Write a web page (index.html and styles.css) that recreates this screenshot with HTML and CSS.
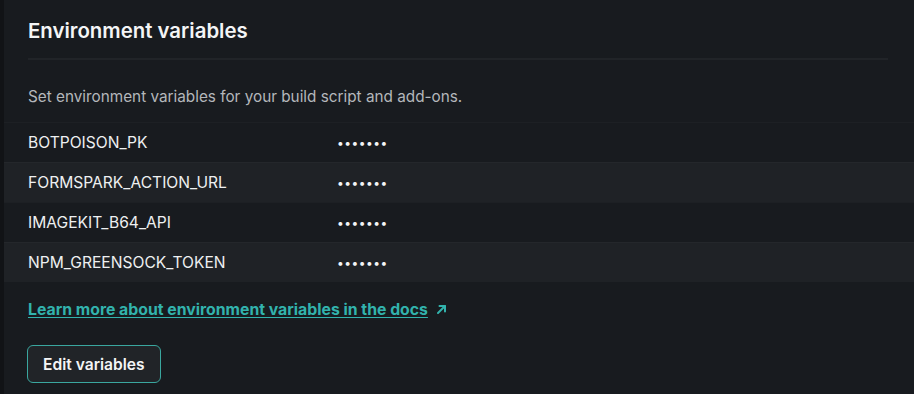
FILE: index.html
```html
<!DOCTYPE html>
<html lang="en">
<head>
    <meta charset="UTF-8">
    <meta name="viewport" content="width=device-width, initial-scale=1.0">
    <title>Environment variables</title>
    <link rel="stylesheet" href="styles.css">
</head>
<body>

    <div class="card">
        <h2 class="card-title">Environment variables</h2>
        <div class="card-body">
            <p class="description">Set environment variables for your build script and add-ons.</p>
            <dl class="env-list">
                <div class="env-row">
                    <dt>BOTPOISON_PK</dt>
                    <dd>&bull;&bull;&bull;&bull;&bull;&bull;&bull;</dd>
                </div>
                <div class="env-row">
                    <dt>FORMSPARK_ACTION_URL</dt>
                    <dd>&bull;&bull;&bull;&bull;&bull;&bull;&bull;</dd>
                </div>
                <div class="env-row">
                    <dt>IMAGEKIT_B64_API</dt>
                    <dd>&bull;&bull;&bull;&bull;&bull;&bull;&bull;</dd>
                </div>
                <div class="env-row">
                    <dt>NPM_GREENSOCK_TOKEN</dt>
                    <dd>&bull;&bull;&bull;&bull;&bull;&bull;&bull;</dd>
                </div>
            </dl>
            <a class="docs-link" href="#">Learn more about environment variables in the docs</a>
            <span class="docs-arrow">
                <svg width="11" height="11" viewBox="0 0 11 11" fill="none" stroke="#32b3ad" stroke-width="2" stroke-linecap="round" stroke-linejoin="round">
                    <path d="M2 9 L9 2"/>
                    <path d="M3.5 2 H9 V7.5"/>
                </svg>
            </span>
            <div class="actions">
                <button type="button" class="edit-btn">Edit variables</button>
            </div>
        </div>
    </div>

</body>
</html>
```

FILE: styles.css
```css
body {
    font-family: Inter, "Open Sans", Arial, sans-serif;
    background-color: #111316;
    margin: 0;
    padding: 0 0 0 4px;
    overflow: hidden;
}

.card {
    background-color: #181b1f;
    min-height: 394px;
    padding-top: 19px;
}

.card-title {
    margin: 0 26px 0 24px;
    padding-bottom: 15px;
    border-bottom: 2px solid #212428;
    font-size: 20.4px;
    font-weight: 600;
    color: #f4f5f6;
    line-height: 24px;
}

.card-body {
    padding-top: 27px;
}

.description {
    margin: 0 0 15px 24px;
    font-size: 15.3px;
    line-height: 20px;
    color: #b4b7bb;
}

.env-list {
    margin: 0;
}

.env-row {
    box-sizing: border-box;
    display: flex;
    align-items: center;
    height: 40px;
    padding-left: 24px;
    border-top: 1px solid #1d2024;
}

.env-row:nth-child(even) {
    background-color: #1f2226;
    border-top-color: #24272b;
}

.env-row dt {
    width: 309px;
    font-size: 15.6px;
    color: #eef0f1;
}

.env-row dd {
    margin: 0;
    font-size: 12px;
    letter-spacing: 0.5px;
    color: #f4f5f6;
}

.docs-link {
    display: inline-block;
    margin: 18px 0 0 24px;
    font-size: 15.8px;
    font-weight: 700;
    color: #32b3ad;
    text-decoration: underline;
    text-underline-offset: 2px;
}

.docs-arrow {
    margin-left: 4px;
}

.actions {
    padding: 26px 0 0 23px;
}

.edit-btn {
    font-family: inherit;
    height: 38px;
    padding: 0 15px;
    font-size: 15.6px;
    font-weight: 600;
    color: #f4f5f6;
    background-color: #212428;
    border: 1.5px solid #3aa79f;
    border-radius: 6px;
    cursor: pointer;
}
```
